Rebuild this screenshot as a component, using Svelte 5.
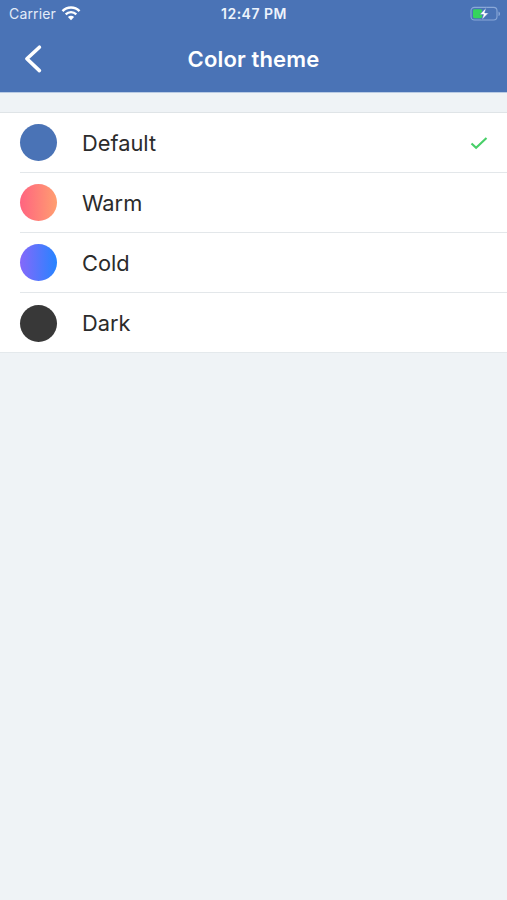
<script lang="ts">
	type Theme = {
		id: string;
		label: string;
	};

	const themes: Theme[] = [
		{ id: 'default', label: 'Default' },
		{ id: 'warm', label: 'Warm' },
		{ id: 'cold', label: 'Cold' },
		{ id: 'dark', label: 'Dark' }
	];

	let selected = $state('default');
</script>

<div class="screen">
	<header>
		<div class="status-bar">
			<div class="carrier">
				<span class="carrier-name">Carrier</span>
				<svg class="wifi" width="20" height="16" viewBox="0 0 20 16" fill="none">
					<path d="M1.5 6.1a12 12 0 0 1 17 0" stroke="#fff" stroke-width="2.5" />
					<path d="M4.7 9.4a7.5 7.5 0 0 1 10.6 0" stroke="#fff" stroke-width="2.3" />
					<path d="M10 15.2l-3.1-3.1a4.4 4.4 0 0 1 6.2 0z" fill="#fff" />
				</svg>
			</div>
			<span class="time">12:47 PM</span>
			<svg class="battery" width="31" height="16" viewBox="0 0 31 16">
				<rect x="1" y="1.4" width="26" height="12.6" rx="3.4" fill="none" stroke="#8aa8d8" stroke-width="1.1" />
				<path d="M28.5 5.4c2 .8 2 3.8 0 4.6z" fill="#8aa8d8" />
				<rect x="3" y="3.2" width="9" height="9" rx="1.4" fill="#35d45c" />
				<path d="M16.2 1.8L9.8 8.6h3.7l-1.6 5.2 6.6-6.9h-3.8z" fill="#fff" stroke="#4a73b6" stroke-width="0.5" />
			</svg>
		</div>
		<nav>
			<button class="back" aria-label="Back">
				<svg width="18" height="30" viewBox="0 0 18 30">
					<path d="M15.4 3.2L2.9 14.8l12.5 11.8" fill="none" stroke="#fff" stroke-width="3.6" stroke-linecap="round" stroke-linejoin="round" />
				</svg>
			</button>
			<h1>Color theme</h1>
		</nav>
	</header>

	<ul class="list">
		{#each themes as theme (theme.id)}
			<li>
				<button class="row" onclick={() => (selected = theme.id)}>
					<span class="swatch {theme.id}"></span>
					<span class="label">{theme.label}</span>
					{#if selected === theme.id}
						<svg class="check" width="18" height="14" viewBox="0 0 18 14">
							<path d="M1.5 7.4l4.6 4.4L16.5 2" fill="none" stroke="#48cf68" stroke-width="2.1" />
						</svg>
					{/if}
				</button>
			</li>
		{/each}
	</ul>
</div>

<style>
	:global(body) {
		margin: 0;
		background: #eff3f6;
	}

	.screen {
		min-height: 100vh;
		font-family: Inter, 'Liberation Sans', sans-serif;
		background: #eff3f6;
	}

	header {
		height: 92px;
		color: #fff;
		background: #4a73b6;
		border-bottom: 1px solid #b9cbe4;
		box-sizing: content-box;
	}

	.status-bar {
		display: grid;
		grid-template-columns: 1fr auto 1fr;
		align-items: center;
		height: 27px;
		padding: 0 6px 0 9px;
	}

	.carrier {
		display: flex;
		align-items: center;
		gap: 5px;
	}

	.carrier-name {
		font-size: 14px;
		letter-spacing: 0.15px;
		color: #e3ebf8;
	}

	.wifi {
		margin-top: -2px;
	}

	.time {
		margin-right: 2px;
		font-size: 14px;
		font-weight: 600;
		letter-spacing: 0.5px;
		color: #edf3fc;
	}

	.battery {
		justify-self: end;
	}

	nav {
		display: grid;
		grid-template-columns: 60px 1fr 60px;
		align-items: center;
		height: 64px;
	}

	button {
		margin: 0;
		padding: 0;
		border: 0;
		font: inherit;
		color: inherit;
		background: none;
	}

	.back {
		display: flex;
		padding-left: 24px;
	}

	h1 {
		margin: 0;
		font-size: 22px;
		font-weight: 600;
		letter-spacing: 0.15px;
		text-align: center;
	}

	.list {
		margin: 19px 0 0;
		padding: 0;
		list-style: none;
		background: #fff;
		border-top: 1px solid #dfe4e7;
		border-bottom: 1px solid #e4e9ec;
	}

	li {
		padding-left: 20px;
	}

	.row {
		display: flex;
		align-items: center;
		width: 100%;
		height: 59px;
		padding-right: 19px;
		box-sizing: border-box;
	}

	li + li .row {
		height: 60px;
		border-top: 1px solid #e3e7ea;
	}

	li:last-child .row {
		padding-top: 1px;
	}

	.swatch {
		width: 37px;
		height: 37px;
		border-radius: 50%;
	}

	.default {
		background: #4a73b6;
	}

	.warm {
		background: linear-gradient(90deg, #ff6480, #ff9e70);
	}

	.cold {
		background: linear-gradient(90deg, #8568fa, #2684ff);
	}

	.dark {
		background: #383838;
	}

	.label {
		margin-left: 25px;
		font-size: 21.8px;
		color: #2b2b2b;
	}

	.check {
		margin-left: auto;
	}
</style>
